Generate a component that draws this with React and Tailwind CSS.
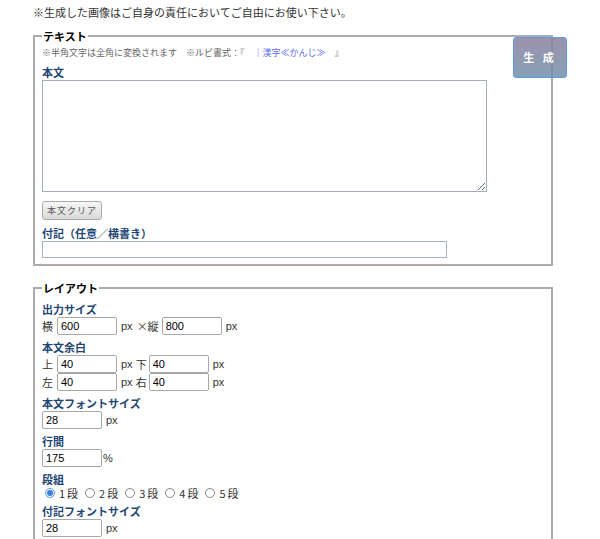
const jp = { fontFamily: '"Noto Sans CJK JP", "Noto Sans", sans-serif' };
const num = { fontFamily: '"Liberation Sans", "Noto Sans CJK JP", sans-serif' };

function Label({ children }) {
  return (
    <div className="text-[11px] leading-[16px] font-bold text-[#1f4673]">
      {children}
    </div>
  );
}

function NumInput({ value }) {
  return (
    <input
      defaultValue={value}
      style={num}
      className="block w-[60px] h-[18px] border border-[#a8a8a8] rounded-[2px] px-[3px] text-[11px] text-black bg-white outline-none"
    />
  );
}

function Unit({ children, className = "" }) {
  return (
    <span className={`text-[11px] text-[#333] ${className}`} style={num}>
      {children}
    </span>
  );
}

function Radio({ checked, label }) {
  return (
    <label className="flex items-center mr-[5px]">
      {checked ? (
        <span className="w-[10px] h-[10px] rounded-full border border-[#5a95e8] bg-white flex items-center justify-center">
          <span className="w-[6px] h-[6px] rounded-full bg-[#3b7de0]" />
        </span>
      ) : (
        <span className="w-[10px] h-[10px] rounded-full border border-[#8a8a8a] bg-white" />
      )}
      <span className="ml-[4px] text-[11px] text-[#333] tracking-[2px]">{label}</span>
    </label>
  );
}

export default function App() {
  return (
    <div className="relative bg-white w-[600px] h-[539px] overflow-hidden pl-[33px]" style={jp}>
      <p className="pt-[5px] text-[11px] leading-[14px] text-[#333]">
        ※生成した画像はご自身の責任においてご自由にお使い下さい。
      </p>

      <fieldset className="mt-[10px] w-[520px] border-2 border-[#acacac] pl-[7px] pt-[4px] pb-[6px]">
        <legend className="px-[1px] text-[11px] leading-[14px] font-bold text-black">
          テキスト
        </legend>
        <div className="text-[9px] leading-[12px] text-[#666]">
          ※半角文字は全角に変換されます　※ルビ書式：『　<span className="text-[#5b6cf0]">｜漢字≪かんじ≫</span>　』
        </div>
        <div className="mt-[5px]">
          <Label>本文</Label>
        </div>
        <textarea className="block w-[445px] h-[112px] border border-[#a4adb8] bg-white outline-none" />
        <button className="mt-[9px] block w-[60px] h-[19px] rounded-[3px] border border-[#aaaaaa] bg-gradient-to-b from-[#f6f6f6] to-[#d9d9d9] text-[9px] text-[#555] tracking-[1px]">
          本文クリア
        </button>
        <div className="mt-[5px]">
          <Label>付記（任意／横書き）</Label>
        </div>
        <input className="block w-[405px] h-[17px] border border-[#a9b3bf] bg-white outline-none" />
      </fieldset>

      <fieldset className="mt-[15px] w-[520px] border-2 border-[#acacac] pl-[7px] pt-[6px] pb-[20px]">
        <legend className="px-[1px] text-[11px] leading-[14px] font-bold text-black">
          レイアウト
        </legend>

        <Label>出力サイズ</Label>
        <div className="flex items-center h-[18px]">
          <span className="w-[15px] text-[11px] text-[#333]">横</span>
          <NumInput value="600" />
          <Unit className="ml-[4px]">px</Unit>
          <span className="ml-[4px] text-[11px] text-[#333]">×縦</span>
          <span className="ml-[3px]">
            <NumInput value="800" />
          </span>
          <Unit className="ml-[4px]">px</Unit>
        </div>

        <div className="mt-[4px]">
          <Label>本文余白</Label>
        </div>
        <div className="flex items-center h-[18px]">
          <span className="w-[15px] text-[11px] text-[#333]">上</span>
          <NumInput value="40" />
          <Unit className="ml-[4px]">px</Unit>
          <span className="ml-[3px] text-[11px] text-[#333]">下</span>
          <span className="ml-[2px]">
            <NumInput value="40" />
          </span>
          <Unit className="ml-[4px]">px</Unit>
        </div>
        <div className="flex items-center h-[18px]">
          <span className="w-[15px] text-[11px] text-[#333]">左</span>
          <NumInput value="40" />
          <Unit className="ml-[4px]">px</Unit>
          <span className="ml-[3px] text-[11px] text-[#333]">右</span>
          <span className="ml-[2px]">
            <NumInput value="40" />
          </span>
          <Unit className="ml-[4px]">px</Unit>
        </div>

        <div className="mt-[4px]">
          <Label>本文フォントサイズ</Label>
        </div>
        <div className="flex items-center h-[18px]">
          <NumInput value="28" />
          <Unit className="ml-[4px]">px</Unit>
        </div>

        <div className="mt-[4px]">
          <Label>行間</Label>
        </div>
        <div className="flex items-center h-[18px]">
          <NumInput value="175" />
          <Unit className="ml-[1px]">%</Unit>
        </div>

        <div className="mt-[4px]">
          <Label>段組</Label>
        </div>
        <div className="flex items-center h-[12px] pl-[3px]">
          <Radio checked label="1段" />
          <Radio label="2段" />
          <Radio label="3段" />
          <Radio label="4段" />
          <Radio label="5段" />
        </div>

        <div className="mt-[4px]">
          <Label>付記フォントサイズ</Label>
        </div>
        <div className="flex items-center h-[18px]">
          <NumInput value="28" />
          <Unit className="ml-[4px]">px</Unit>
        </div>
      </fieldset>

      <button className="absolute left-[513px] top-[37px] w-[54px] h-[41px] rounded-[3px] border border-[#5b9ae8] bg-gradient-to-b from-[#8a7fa0]/85 to-[#6f8fa6]/85 text-white text-[11px] font-bold tracking-[3px]">
        生 成
      </button>
    </div>
  );
}
